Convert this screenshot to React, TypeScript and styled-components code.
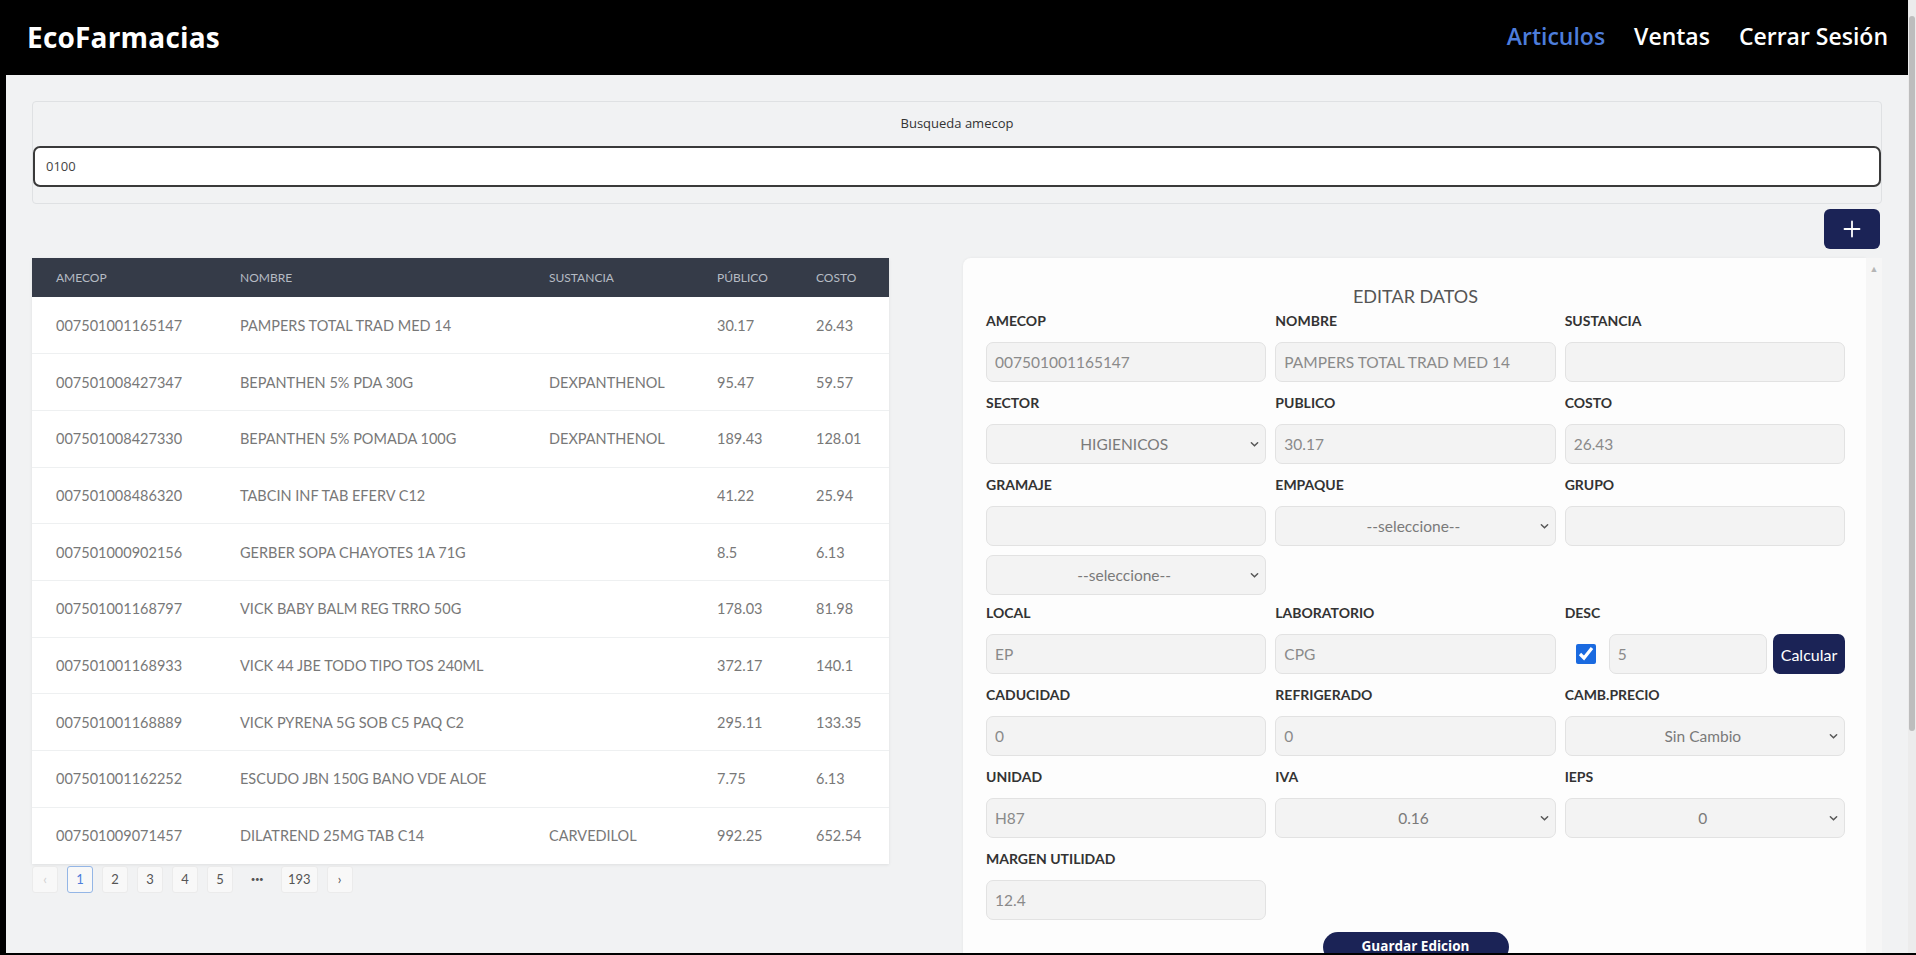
import React from 'react';
import styled, { createGlobalStyle } from 'styled-components';

const narrow = `Lato, "Open Sans", sans-serif`;
const sans = `"Open Sans", "Noto Sans", sans-serif`;
const navy = '#1b2356';

const GlobalStyle = createGlobalStyle`
  html, body { margin: 0; padding: 0; background: #000; overflow: hidden; }
  body { font-family: ${sans}; }
  * { box-sizing: border-box; }
`;

const Screen = styled.div`
  display: flex;
  height: 953px;
  padding-left: 6px;
  background: #000;
  overflow: hidden;
`;

const Page = styled.div`
  flex: 1;
  min-width: 0;
  display: flex;
  flex-direction: column;
  background: #f1f2f3;
`;

const PageScroll = styled.div`
  width: 8px;
  background: #ececec;
  display: flex;
  flex-direction: column;
  padding-top: 16px;
`;

const PageThumb = styled.div`
  height: 715px;
  background: #bdbdbd;
  border-radius: 3px;
  margin: 0 1px;
`;

const TopBar = styled.header`
  height: 75px;
  flex: none;
  background: #000;
  display: flex;
  align-items: center;
  justify-content: space-between;
  padding: 0 20px 0 21px;
`;

const Brand = styled.div`
  color: #fff;
  font: 700 28px ${sans};
  letter-spacing: 0.2px;
  margin-top: -2px;
`;

const Nav = styled.nav`
  display: flex;
  align-items: center;
  gap: 29px;
  margin-top: -4px;
`;

const NavLink = styled.a<{ $active?: boolean }>`
  font: 600 23px ${sans};
  color: ${(p) => (p.$active ? '#4d7ddb' : '#fff')};
  text-decoration: none;
`;

const Content = styled.main`
  padding: 26px 26px 0;
  display: flex;
  flex-direction: column;
`;

const SearchCard = styled.section`
  background: #f1f2f3;
  border: 1px solid #dfe1e3;
  border-radius: 4px;
  padding: 13px 0 16px;
  display: flex;
  flex-direction: column;
  align-items: center;
  gap: 15px;
`;

const SearchLabel = styled.label`
  font: 400 13px/16px ${sans};
  color: #333;
`;

const SearchInput = styled.input`
  width: 100%;
  height: 41px;
  border: 2px solid #3a3a3a;
  border-radius: 7px;
  background: #fff;
  padding: 0 11px 2px;
  font: 400 13px ${sans};
  color: #444;
  outline: none;
`;

const ActionRow = styled.div`
  display: flex;
  justify-content: flex-end;
  padding-right: 2px;
  margin-top: 5px;
`;

const AddButton = styled.button`
  width: 56px;
  height: 40px;
  border: none;
  border-radius: 6px;
  background: ${navy};
  color: #fff;
  display: flex;
  align-items: center;
  justify-content: center;
  padding: 0;
`;

const Columns = styled.div`
  display: grid;
  grid-template-columns: 857px 1fr;
  column-gap: 74px;
  margin-top: 9px;
  align-items: start;
`;

const LeftCol = styled.div`
  display: flex;
  flex-direction: column;
`;

const Table = styled.table`
  width: 857px;
  border-collapse: collapse;
  table-layout: fixed;
  background: #fff;
  box-shadow: 0 1px 3px rgba(0, 0, 0, 0.08);
`;

const Th = styled.th`
  height: 39px;
  background: #353b48;
  color: #b6bbc4;
  font: 400 12px ${narrow};
  text-align: left;
  padding: 0 0 0 24px;
  text-transform: uppercase;
`;

const Tr = styled.tr`
  height: 56.7px;
  border-top: 1px solid #eef0f1;
  &:first-child { border-top: none; }
`;

const Td = styled.td`
  padding: 0 0 0 24px;
  font: 400 14.5px ${narrow};
  color: #787878;
  white-space: nowrap;
  overflow: hidden;
`;

const Pager = styled.div`
  display: flex;
  align-items: center;
  gap: 9px;
  margin-top: 2px;
`;

const PageItem = styled.span<{ $active?: boolean; $muted?: boolean; $plain?: boolean }>`
  min-width: ${(p) => (p.$plain ? '30px' : '26px')};
  height: 27px;
  padding: 0 6px;
  display: inline-flex;
  align-items: center;
  justify-content: center;
  border-radius: 3px;
  background: ${(p) => (p.$plain ? 'transparent' : '#f8f8f8')};
  border: 1px solid ${(p) => (p.$active ? '#94b6e6' : p.$plain ? 'transparent' : '#ebebeb')};
  color: ${(p) => (p.$active ? '#4d7ddb' : p.$muted ? '#cfcfcf' : '#555')};
  font: 400 ${(p) => (p.$plain ? '8px' : '13px')} ${narrow};
  letter-spacing: ${(p) => (p.$plain ? '-0.5px' : '0')};
`;

const RightCol = styled.div`
  display: flex;
  align-items: stretch;
`;

const EditCard = styled.section`
  flex: 1;
  background: #fdfdfd;
  border-radius: 8px 0 0 0;
  padding: 26px 21px 40px 23px;
  box-shadow: 0 0 3px rgba(0, 0, 0, 0.06);
`;

const CardScroll = styled.div`
  width: 16px;
  background: #f6f6f6;
  display: flex;
  justify-content: center;
  padding-top: 4px;
  color: #b5b5b5;
  font: 9px ${sans};
`;

const CardTitle = styled.h2`
  margin: 0 0 5px;
  text-align: center;
  font: 400 18px/24px ${narrow};
  color: #555;
`;

const FormGrid = styled.div`
  display: grid;
  grid-template-columns: repeat(3, 1fr);
  column-gap: 9px;
`;

const Field = styled.div`
  display: flex;
  flex-direction: column;
  margin-bottom: 13px;
  min-width: 0;
`;

const ExtraField = styled.div`
  grid-column: 1 / -1;
  width: calc((100% - 18px) / 3);
  margin: -4px 0 10px;
`;

const Label = styled.label`
  font: 700 14px/16px ${narrow};
  color: #333;
  margin-bottom: 13px;
  text-transform: uppercase;
`;

const TextInput = styled.input`
  width: 100%;
  height: 40px;
  background: #f3f3f3;
  border: 1px solid #e2e2e2;
  border-radius: 7px;
  padding: 0 8px;
  font: 400 15.5px ${narrow};
  color: #8a8a8a;
  outline: none;
  min-width: 0;
`;

const SelectWrap = styled.div`
  position: relative;
  width: 100%;
`;

const Select = styled.select`
  appearance: none;
  width: 100%;
  height: 40px;
  background: #f3f3f3;
  border: 1px solid #e2e2e2;
  border-radius: 7px;
  padding: 0 12px 0 8px;
  font: 400 15.5px ${narrow};
  color: #7a7a7a;
  text-align: center;
  text-align-last: center;
  outline: none;
`;

const Chevron = styled.svg`
  position: absolute;
  right: 7px;
  top: 50%;
  width: 9px;
  height: 9px;
  transform: translateY(-50%);
  pointer-events: none;
`;

const DescRow = styled.div`
  display: flex;
  align-items: center;
`;

const Check = styled.input`
  width: 20px;
  height: 20px;
  margin: 0 13px 0 11px;
  accent-color: #1a6ae0;
  flex: none;
`;

const CalcButton = styled.button`
  width: 72px;
  height: 40px;
  margin-left: 6px;
  flex: none;
  border: none;
  border-radius: 7px;
  background: ${navy};
  color: #fff;
  font: 400 16px ${narrow};
  padding: 0;
`;

const SaveRow = styled.div`
  display: flex;
  justify-content: center;
  margin-top: -1px;
`;

const SaveButton = styled.button`
  width: 186px;
  height: 30px;
  border: none;
  border-radius: 16px;
  background: ${navy};
  color: #fff;
  font: 700 13.5px ${sans};
  padding: 0 0 3px;
`;

type Row = [string, string, string, string, string];
const rows: Row[] = [
  ['007501001165147', 'PAMPERS TOTAL TRAD MED 14', '', '30.17', '26.43'],
  ['007501008427347', 'BEPANTHEN 5% PDA 30G', 'DEXPANTHENOL', '95.47', '59.57'],
  ['007501008427330', 'BEPANTHEN 5% POMADA 100G', 'DEXPANTHENOL', '189.43', '128.01'],
  ['007501008486320', 'TABCIN INF TAB EFERV C12', '', '41.22', '25.94'],
  ['007501000902156', 'GERBER SOPA CHAYOTES 1A 71G', '', '8.5', '6.13'],
  ['007501001168797', 'VICK BABY BALM REG TRRO 50G', '', '178.03', '81.98'],
  ['007501001168933', 'VICK 44 JBE TODO TIPO TOS 240ML', '', '372.17', '140.1'],
  ['007501001168889', 'VICK PYRENA 5G SOB C5 PAQ C2', '', '295.11', '133.35'],
  ['007501001162252', 'ESCUDO JBN 150G BANO VDE ALOE', '', '7.75', '6.13'],
  ['007501009071457', 'DILATREND 25MG TAB C14', 'CARVEDILOL', '992.25', '652.54'],
];

const SelectBox: React.FC<{ value: string }> = ({ value }) => (
  <SelectWrap>
    <Select defaultValue={value}>
      <option value={value}>{value}</option>
    </Select>
    <Chevron viewBox="0 0 10 10">
      <path d="M1.5 3.5 L5 7 L8.5 3.5" fill="none" stroke="#555" strokeWidth="1.6" strokeLinecap="round" />
    </Chevron>
  </SelectWrap>
);

const InputField: React.FC<{ label: string; value?: string }> = ({ label, value = '' }) => (
  <Field>
    <Label>{label}</Label>
    <TextInput readOnly value={value} />
  </Field>
);

const SelectField: React.FC<{ label: string; value: string }> = ({ label, value }) => (
  <Field>
    <Label>{label}</Label>
    <SelectBox value={value} />
  </Field>
);

export default function App() {
  return (
    <>
      <GlobalStyle />
      <Screen>
        <Page>
          <TopBar>
            <Brand>EcoFarmacias</Brand>
            <Nav>
              <NavLink $active>Articulos</NavLink>
              <NavLink>Ventas</NavLink>
              <NavLink>Cerrar Sesión</NavLink>
            </Nav>
          </TopBar>
          <Content>
            <SearchCard>
              <SearchLabel>Busqueda amecop</SearchLabel>
              <SearchInput readOnly value="0100" />
            </SearchCard>
            <ActionRow>
              <AddButton aria-label="Agregar">
                <svg width="20" height="20" viewBox="0 0 20 20">
                  <path d="M10 2.5 V17.5 M2.5 10 H17.5" stroke="#fff" strokeWidth="1.8" strokeLinecap="round" />
                </svg>
              </AddButton>
            </ActionRow>
            <Columns>
              <LeftCol>
                <Table>
                  <colgroup>
                    <col style={{ width: 184 }} />
                    <col style={{ width: 309 }} />
                    <col style={{ width: 168 }} />
                    <col style={{ width: 99 }} />
                    <col />
                  </colgroup>
                  <thead>
                    <tr>
                      <Th>Amecop</Th>
                      <Th>Nombre</Th>
                      <Th>Sustancia</Th>
                      <Th>Público</Th>
                      <Th>Costo</Th>
                    </tr>
                  </thead>
                  <tbody>
                    {rows.map((r) => (
                      <Tr key={r[0]}>
                        {r.map((c, i) => (
                          <Td key={i}>{c}</Td>
                        ))}
                      </Tr>
                    ))}
                  </tbody>
                </Table>
                <Pager>
                  <PageItem $muted>‹</PageItem>
                  <PageItem $active>1</PageItem>
                  <PageItem>2</PageItem>
                  <PageItem>3</PageItem>
                  <PageItem>4</PageItem>
                  <PageItem>5</PageItem>
                  <PageItem $plain>•••</PageItem>
                  <PageItem>193</PageItem>
                  <PageItem>›</PageItem>
                </Pager>
              </LeftCol>
              <RightCol>
                <EditCard>
                  <CardTitle>EDITAR DATOS</CardTitle>
                  <FormGrid>
                    <InputField label="Amecop" value="007501001165147" />
                    <InputField label="Nombre" value="PAMPERS TOTAL TRAD MED 14" />
                    <InputField label="Sustancia" />
                    <SelectField label="Sector" value="HIGIENICOS" />
                    <InputField label="Publico" value="30.17" />
                    <InputField label="Costo" value="26.43" />
                    <InputField label="Gramaje" />
                    <SelectField label="Empaque" value="--seleccione--" />
                    <InputField label="Grupo" />
                    <ExtraField>
                      <SelectBox value="--seleccione--" />
                    </ExtraField>
                    <InputField label="Local" value="EP" />
                    <InputField label="Laboratorio" value="CPG" />
                    <Field>
                      <Label>Desc</Label>
                      <DescRow>
                        <Check type="checkbox" defaultChecked />
                        <TextInput readOnly value="5" />
                        <CalcButton>Calcular</CalcButton>
                      </DescRow>
                    </Field>
                    <InputField label="Caducidad" value="0" />
                    <InputField label="Refrigerado" value="0" />
                    <SelectField label="Camb.Precio" value="Sin Cambio" />
                    <InputField label="Unidad" value="H87" />
                    <SelectField label="IVA" value="0.16" />
                    <SelectField label="IEPS" value="0" />
                    <InputField label="Margen Utilidad" value="12.4" />
                  </FormGrid>
                  <SaveRow>
                    <SaveButton>Guardar Edicion</SaveButton>
                  </SaveRow>
                </EditCard>
                <CardScroll>▲</CardScroll>
              </RightCol>
            </Columns>
          </Content>
        </Page>
        <PageScroll>
          <PageThumb />
        </PageScroll>
      </Screen>
    </>
  );
}
